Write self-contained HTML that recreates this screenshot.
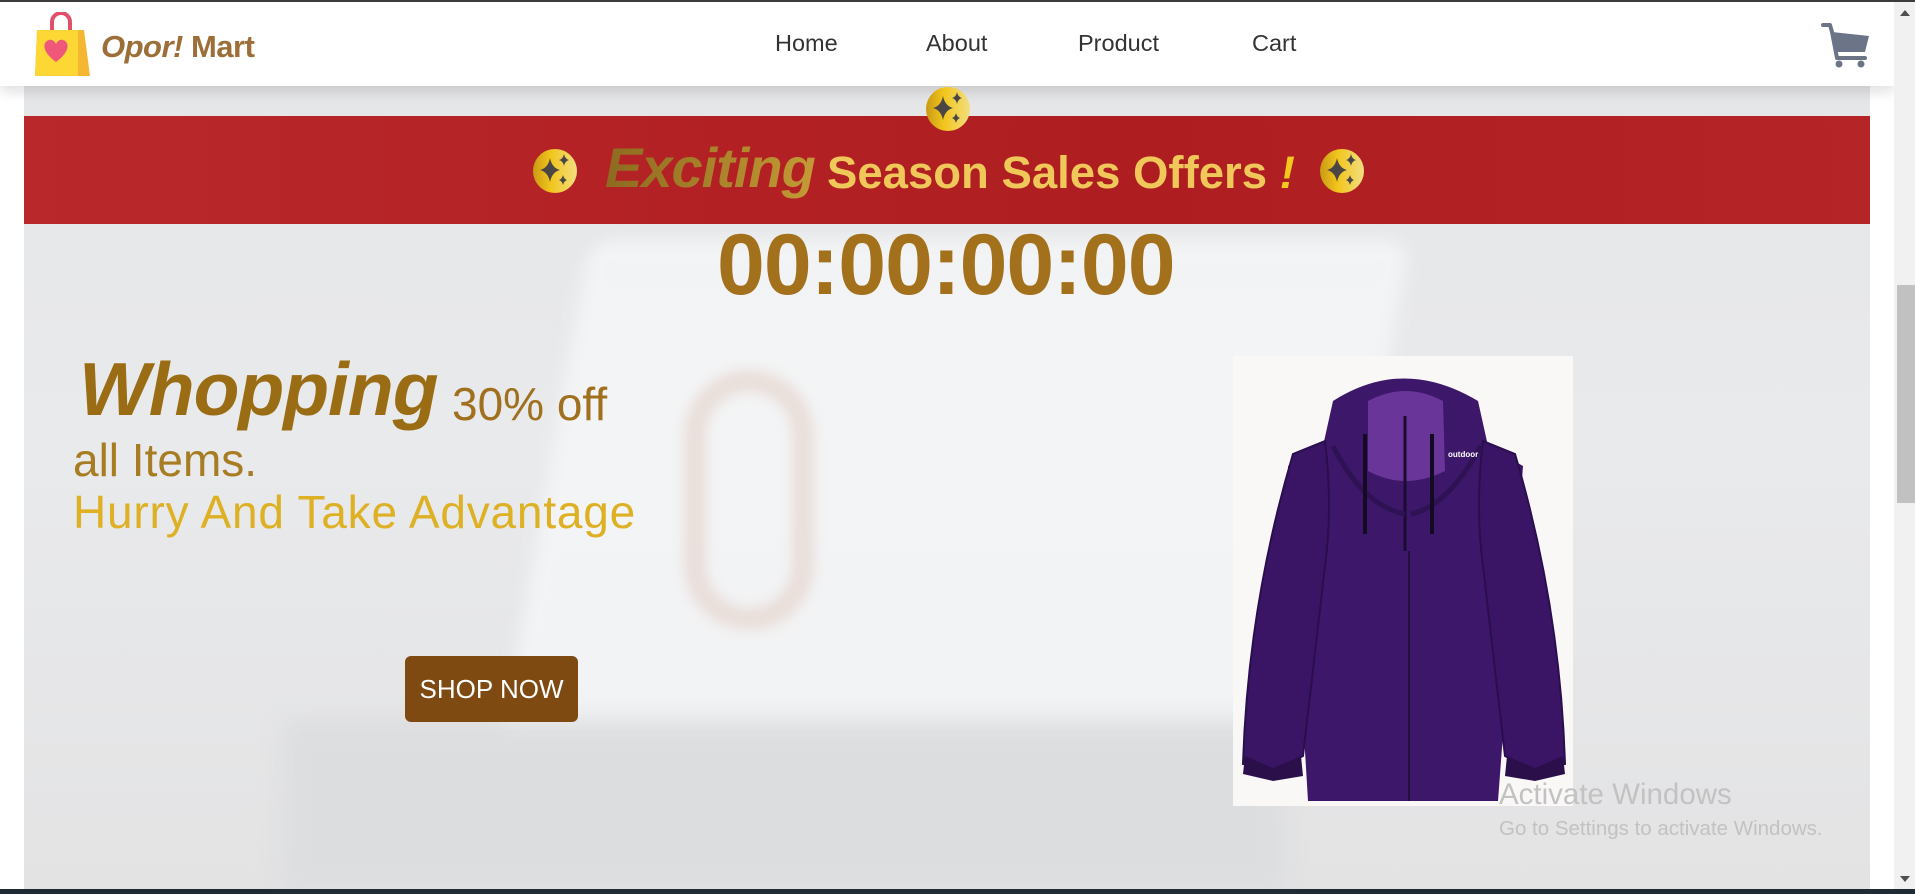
<!DOCTYPE html>
<html><head><meta charset="utf-8"><style>
*{margin:0;padding:0;box-sizing:border-box}
html,body{width:1915px;height:894px;overflow:hidden;background:#fff;font-family:"Liberation Sans",sans-serif;position:relative}
.abs{position:absolute}
#topline{left:0;top:0;width:1915px;height:2px;background:#3c3c3c}
#bg{left:24px;top:0;width:1846px;height:889px;background:linear-gradient(180deg,#e4e5e7 0%,#e9eaec 50%,#e3e3e4 100%);overflow:hidden}
#screen{left:520px;top:240px;width:820px;height:520px;background:#f5f6f7;filter:blur(8px);transform:skewX(-10deg);border-radius:24px;opacity:.85}
#kb{left:260px;top:720px;width:1000px;height:170px;background:#dcdddf;filter:blur(12px)}
#nav{left:0;top:2px;width:1894px;height:84px;background:#fff;box-shadow:0 6px 12px rgba(0,0,0,.12)}
.nl{top:30px;font-size:23.5px;color:#333}
#banner{left:24px;top:116px;width:1846px;height:108px;background:linear-gradient(90deg,#b9292b,#b22023 40%,#ae1e20 60%,#b52426)}
.gold{background:linear-gradient(90deg,#8d6a20,#c39a35);-webkit-background-clip:text;background-clip:text;color:transparent}
#scroll{left:1894px;top:2px;width:21px;height:887px;background:#f1f1f1}
#thumb{left:1897px;top:285px;width:18px;height:218px;background:#c1c1c1}
#task{left:0;top:889px;width:1915px;height:5px;background:#1f2a33}
</style></head><body>
<div id="bg" class="abs">
 <div id="screen" class="abs"></div>
 <div id="kb" class="abs"></div>
 <div class="abs" style="left:660px;top:370px;width:130px;height:260px;border:22px solid #e3d0c8;border-radius:70px;filter:blur(6px);opacity:.6"></div>
</div>
<div id="nav" class="abs"></div>
<div id="topline" class="abs"></div>
<svg class="abs" style="left:34px;top:12px" width="58" height="64" viewBox="0 0 58 64">
 <path d="M18 20 V10 a9 9 0 0 1 18 0 V20" fill="none" stroke="#e0506a" stroke-width="4"/>
 <path d="M3 18 H50 L56 64 H1 Z" fill="#f5b731"/>
 <path d="M3 18 H44 V64 H1 Z" fill="#fdd835"/>
 <path d="M22 50 C8 40 8 30 15 28 C19 27 21 30 22 32 C23 30 25 27 29 28 C36 30 36 40 22 50Z" fill="#f0587a"/>
</svg>
<div class="abs" style="left:101px;top:29px;font-size:31px;font-weight:bold;color:#9c6e38;letter-spacing:-0.5px"><i>Opor!</i> Mart</div>
<div class="abs nl" style="left:775px">Home</div>
<div class="abs nl" style="left:926px">About</div>
<div class="abs nl" style="left:1078px">Product</div>
<div class="abs nl" style="left:1252px">Cart</div>
<svg class="abs" style="left:1820px;top:22px" width="50" height="46" viewBox="0 0 50 46">
 <path d="M3 3 L10 3 L12 10 L17 36 H45" fill="none" stroke="#6b7587" stroke-width="4" stroke-linecap="round" stroke-linejoin="round"/>
 <path d="M12 10 L49 14 L45 30 H15 Z" fill="#6b7587"/>
 <circle cx="19" cy="42" r="3.5" fill="#6b7587"/><circle cx="41" cy="42" r="3.5" fill="#6b7587"/>
</svg>
<div id="banner" class="abs"></div>
<svg width="0" height="0" style="position:absolute"><defs>
<linearGradient id="cg" x1="0" x2="1"><stop offset="0" stop-color="#c99a14"/><stop offset=".4" stop-color="#f2c51c"/><stop offset="1" stop-color="#f2de80"/></linearGradient>
<symbol id="sp" viewBox="0 0 46 46"><ellipse cx="23" cy="23" rx="22" ry="22" fill="url(#cg)"/>
<path d="M18 10 Q20 20 28 22 Q20 24 18 34 Q16 24 8 22 Q16 20 18 10Z M32 6 Q33 11 37 12 Q33 13 32 18 Q31 13 27 12 Q31 11 32 6Z M31 27 Q32 31 35 32 Q32 33 31 37 Q30 33 27 32 Q30 31 31 27Z" fill="#4a4646"/></symbol></defs></svg>
<svg class="abs" style="left:925px;top:86px" width="46" height="46"><use href="#sp"/></svg>
<svg class="abs" style="left:532px;top:148px" width="46" height="46"><use href="#sp"/></svg>
<svg class="abs" style="left:1319px;top:148px" width="46" height="46"><use href="#sp"/></svg>
<div class="abs gold" style="left:605px;top:135px;font-size:56px;font-weight:bold;font-style:italic;letter-spacing:-1px">Exciting</div>
<div class="abs" style="left:827px;top:147px;font-size:45.5px;font-weight:bold;color:#f0c85a">Season Sales Offers <i style="color:#f2c81e">!</i></div>
<div class="abs" style="left:717px;top:216px;font-size:86px;font-weight:bold;color:#a3701c;letter-spacing:-1px">00:00:00:00</div>
<div class="abs" style="left:79px;top:346px;font-size:75px;font-weight:bold;font-style:italic;color:#9a6c14;letter-spacing:-1px">Whopping</div>
<div class="abs" style="left:452px;top:377px;font-size:46px;color:#a0701f">30% off</div>
<div class="abs" style="left:73px;top:433px;font-size:46px;color:#a87c22">all Items.</div>
<div class="abs" style="left:73px;top:485px;font-size:46px;color:#deb024;letter-spacing:0.8px">Hurry And Take Advantage</div>
<div class="abs" style="left:405px;top:656px;width:173px;height:66px;background:#7f4a12;border-radius:6px;color:#fff;font-size:26px;text-align:center;line-height:66px">SHOP NOW</div>
<div class="abs" style="left:1233px;top:356px;width:340px;height:450px;background:#f9f8f7"></div>
<svg class="abs" style="left:1233px;top:356px" width="340" height="450" viewBox="0 0 340 450">
 <path d="M100 45 Q170 0 245 45 L255 90 L290 110 L265 445 L75 445 L55 110 L90 90 Z" fill="#3c176a"/>
 <path d="M60 98 L92 85 Q100 150 92 210 L70 400 L40 415 L10 408 Q15 250 60 98Z" fill="#3a1566" stroke="#2a0e4e" stroke-width="2"/>
 <path d="M282 98 L250 85 Q242 150 250 210 L272 400 L302 415 L332 408 Q327 250 282 98Z" fill="#3a1566" stroke="#2a0e4e" stroke-width="2"/>
 <path d="M12 400 L40 412 L68 400 L70 420 L40 425 L10 418Z M274 400 L302 412 L330 400 L332 418 L302 425 L272 420Z" fill="#2a0f4a"/>
 <path d="M135 45 Q172 25 210 45 L212 115 Q172 135 135 115 Z" fill="#6a3599"/>
 <path d="M172 60 V195" stroke="#1a0c2c" stroke-width="3"/>
 <path d="M176 195 V445" stroke="#241040" stroke-width="2"/>
 <path d="M100 90 Q130 150 172 158 M248 90 Q215 150 178 158" stroke="#2e1254" stroke-width="5" fill="none"/>
 <rect x="130" y="78" width="4" height="100" fill="#140a22"/>
 <rect x="197" y="78" width="4" height="100" fill="#140a22"/>
 <text x="215" y="101" font-size="8" fill="#fff" font-weight="bold">outdoor</text>
</svg>
<div class="abs" style="left:1499px;top:778px;font-size:29.5px;color:#c2c2c2">Activate Windows</div>
<div class="abs" style="left:1499px;top:817px;font-size:20.5px;color:#c2c2c2">Go to Settings to activate Windows.</div>
<div id="scroll" class="abs"></div>
<div id="thumb" class="abs"></div>
<div class="abs" style="left:1900px;top:10px;width:0;height:0;border-left:5px solid transparent;border-right:5px solid transparent;border-bottom:6px solid #505050"></div>
<div class="abs" style="left:1900px;top:876px;width:0;height:0;border-left:5px solid transparent;border-right:5px solid transparent;border-top:6px solid #505050"></div>
<div id="task" class="abs"></div>
</body></html>
